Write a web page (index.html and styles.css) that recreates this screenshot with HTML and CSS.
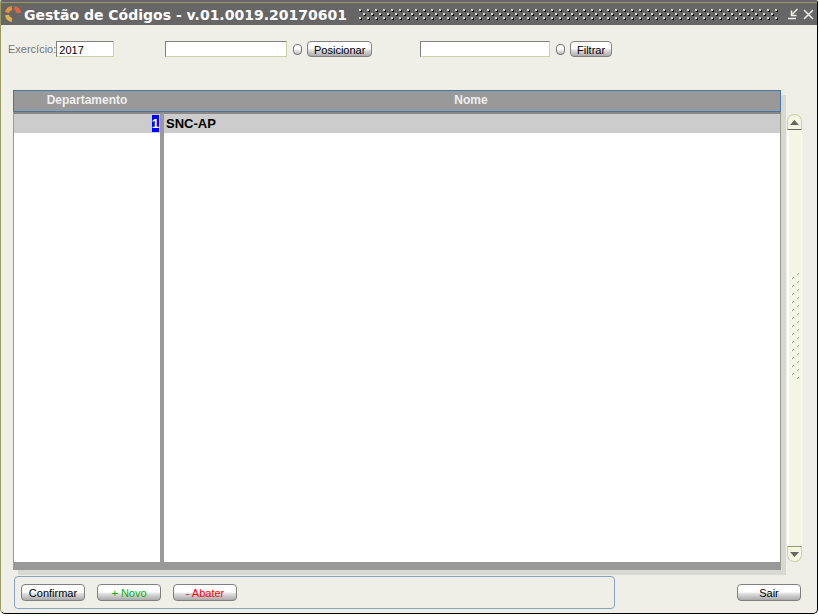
FILE: index.html
```html
<!DOCTYPE html>
<html lang="pt">
<head>
<meta charset="utf-8">
<title>Gestão de Códigos</title>
<link rel="stylesheet" href="styles.css">
</head>
<body>
<div class="window">
  <header class="titlebar">
    <svg class="logo" width="18" height="18" viewBox="0 0 18 18" fill="none" stroke-width="4" aria-hidden="true">
      <path d="M3 7.500A6 6 0 0 1 8 3" stroke="#e8923c"/>
      <path d="M10.500 3A6 6 0 0 1 15 8" stroke="#e2663a"/>
      <path d="M3 10A6 6 0 0 0 8 15" stroke="#e5b24a"/>
    </svg>
    <h1 class="title">Gestão de Códigos - v.01.0019.20170601</h1>
    <svg class="grip" height="11" aria-hidden="true">
      <defs>
        <pattern id="studs" width="8" height="8" patternUnits="userSpaceOnUse">
          <path d="M1 1h2v2h-2zM5 5h2v2h-2z" fill="#000"/>
          <path d="M0 0h2v1h-1v1h-1zM1 1h1v1h-1zM4 4h2v1h-1v1h-1zM5 5h1v1h-1z" fill="#d9d9bd"/>
        </pattern>
      </defs>
      <rect width="100%" height="11" fill="url(#studs)"/>
    </svg>
    <button class="winbtn" type="button" aria-label="Minimizar">
      <svg width="12" height="12" viewBox="0 0 12 12" fill="none" stroke="#f0f0e8"><path d="M1 10.500h8M10.500 1L5 6.500" stroke-width="1.500"/><path d="M4.500 2.500v5h5" stroke-width="1.500"/></svg>
    </button>
    <button class="winbtn" type="button" aria-label="Fechar">
      <svg width="12" height="12" viewBox="0 0 12 12" fill="none" stroke="#f0f0e8"><path d="M1 2l9 9M10 2l-9 9" stroke-width="1.500"/></svg>
    </button>
  </header>

  <form class="filters">
    <div class="group year">
      <label for="ano">Exercício:</label>
      <input id="ano" class="field short" type="text" value="2017">
    </div>
    <div class="group position">
      <input class="field" type="text" aria-label="Posicionar em">
      <button class="bead" type="button" aria-label="Lista de posições"></button>
      <button class="btn" type="button">Posicionar</button>
    </div>
    <div class="group">
      <input class="field wide" type="text" aria-label="Filtrar por">
      <button class="bead" type="button" aria-label="Lista de filtros"></button>
      <button class="btn" type="button">Filtrar</button>
    </div>
  </form>

  <main class="content">
    <div class="grid">
      <table class="codes">
        <colgroup><col class="col-dept"><col></colgroup>
        <thead><tr><th>Departamento</th><th>Nome</th></tr></thead>
        <tbody>
          <tr class="selected"><td><span class="mark">1</span></td><td>SNC-AP</td></tr>
          <tr class="filler"><td></td><td></td></tr>
        </tbody>
      </table>
    </div>
    <div class="scroll">
      <button class="arrow up" type="button" aria-label="Subir"><svg width="9" height="5" viewBox="0 0 9 5"><path d="M0 5L4.500 0L9 5z" fill="#666"/></svg></button>
      <div class="track">
        <svg width="9" height="108" aria-hidden="true">
          <defs>
            <pattern id="ticks" width="9" height="8" patternUnits="userSpaceOnUse">
              <path d="M5 0h2v2h-2zM0 4h2v2h-2z" fill="#fff"/>
              <path d="M7 0h1v1h-1zM6 1h1v1h-1zM2 4h1v1h-1zM1 5h1v1h-1z" fill="#999966"/>
            </pattern>
          </defs>
          <rect width="9" height="108" fill="url(#ticks)"/>
        </svg>
      </div>
      <button class="arrow down" type="button" aria-label="Descer"><svg width="9" height="5" viewBox="0 0 9 5"><path d="M0 0L4.500 5L9 0z" fill="#666"/></svg></button>
    </div>
  </main>

  <footer class="actions">
    <div class="panel">
      <button class="btn action" type="button">Confirmar</button>
      <button class="btn action add" type="button">+ Novo</button>
      <button class="btn action remove" type="button">- Abater</button>
    </div>
    <button class="btn action" type="button">Sair</button>
  </footer>
</div>
</body>
</html>
```
FILE: styles.css
```css
* { box-sizing: border-box; }

body {
  margin: 0;
  background: #fff;
  font: 11px/14px "Liberation Sans", Arial, sans-serif;
  color: #000;
}

button, input { font: inherit; margin: 0; }

.window {
  display: flex;
  flex-direction: column;
  height: calc(100vh - 2px);
  margin-right: 1px;
  border: 1px solid #000;
  border-left-color: #999966;
  border-top: 2px solid #666;
  border-radius: 2px 2px 5px 5px;
  background: #efeee7;
}

.titlebar {
  display: flex;
  align-items: center;
  height: 23px;
  padding-left: 3px;
  border-top: 1px solid #999966;
  background: #666;
}

.title {
  margin: 0 12px 0 2px;
  padding-top: 2px;
  font: bold 14px/20px "DejaVu Sans", Verdana, sans-serif;
  color: #fff;
  white-space: nowrap;
}

.grip { flex: 1; min-width: 0; margin-right: 6px; }

.winbtn {
  display: flex;
  align-items: center;
  justify-content: center;
  width: 16px;
  height: 16px;
  padding: 0;
  border: 0;
  background: none;
}

.filters {
  display: flex;
  height: 65px;
  padding: 16px 0 0 7px;
}

.group { display: flex; align-items: center; height: 16px; }
.year { width: 157px; color: #777; }
.position { width: 255px; }

.field {
  width: 122px;
  height: 16px;
  padding: 1px 2px 0;
  border: 1px solid #cfd3a4;
  border-top-color: #808080;
  border-left-color: #808080;
  background: #fff;
}
.field.short { width: 58px; }
.field.wide { width: 130px; }

.bead {
  width: 9px;
  height: 11px;
  margin: 0 5px 0 6px;
  padding: 0;
  border: 1px solid #777;
  border-radius: 4px;
  background: linear-gradient(#fff 40%, #bbb);
}

.btn {
  height: 16px;
  padding: 1px 6px 0;
  border: 1px solid #808080;
  border-radius: 4px;
  background: linear-gradient(#fff 45%, #ddd 60%, #aaa);
  line-height: 14px;
}

.content {
  display: flex;
  flex: 1;
  min-height: 0;
  padding: 0 15px 0 12px;
}

.grid {
  flex: 1;
  min-width: 0;
  border-bottom: 8px solid #999;
  box-shadow: 5px 5px 0 #d9d9d3;
}

.codes {
  width: 100%;
  height: 100%;
  border-spacing: 0;
  table-layout: fixed;
  background: #fff;
  font-size: 12px;
  font-weight: bold;
}
.col-dept { width: 151px; }

.codes th {
  height: 22px;
  padding: 0 0 2px;
  border-top: 1px solid #4477aa;
  border-bottom: 1px solid #4477aa;
  background: #999;
  color: #efefef;
}
.codes th:first-child { border-left: 1px solid #4477aa; padding-right: 4px; }
.codes th:last-child { border-right: 1px solid #4477aa; padding-right: 2px; }

.codes td { padding: 0 2px; border-right: 1px solid #999; }
.codes td:first-child {
  padding-right: 1px;
  border-left: 1px solid #999;
  border-right: 4px solid #999;
  text-align: right;
}
.selected td {
  height: 21px;
  border-top: 2px solid #888;
  background: #ccc;
  font-size: 13px;
}
.mark {
  display: inline-block;
  height: 17px;
  background: #00f;
  color: #fff;
  line-height: 17px;
}

.scroll {
  display: flex;
  flex-direction: column;
  width: 15px;
  margin: 24px 0 8px 6px;
}
.arrow {
  display: flex;
  align-items: center;
  justify-content: center;
  height: 16px;
  padding: 0;
  border: 1px solid #cfd3a4;
  background: #f5f5e3;
}
.up { border-bottom-color: #666; border-radius: 7px 7px 0 0; }
.down { border-top-color: #999966; border-radius: 0 0 7px 7px; }
.track {
  display: flex;
  flex: 1;
  align-items: center;
  justify-content: center;
  padding-bottom: 22px;
  border: 1px solid #fff;
  border-width: 0 1px 0 2px;
  background: #f5f5e3;
}

.actions {
  display: flex;
  align-items: center;
  justify-content: space-between;
  padding: 6px 16px 4px 13px;
}
.panel {
  display: flex;
  gap: 12px;
  width: 601px;
  padding: 7px 6px;
  border: 1px solid #85a3c2;
  border-radius: 4px;
}
.action { width: 64px; height: 17px; padding: 1px 0 0; }
.add { color: #00b400; }
.remove { color: #f00; }
```
